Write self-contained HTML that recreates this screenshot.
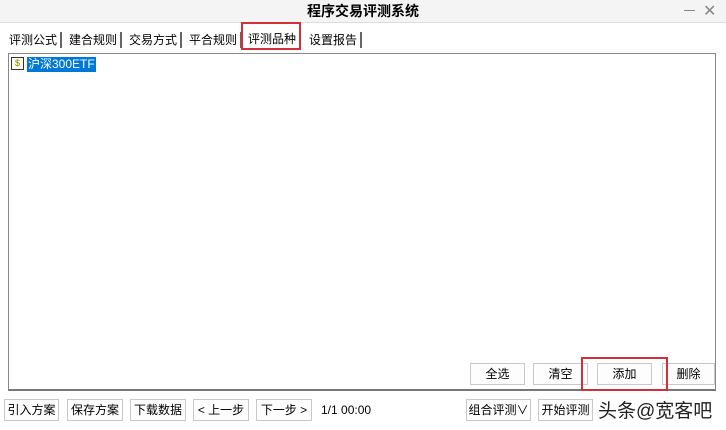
<!DOCTYPE html>
<html><head><meta charset="utf-8"><style>
*{margin:0;padding:0;box-sizing:border-box}
body{width:726px;height:430px;background:#fff;font-family:"Liberation Sans","Noto Sans CJK SC",sans-serif;font-size:12px;color:#000;position:relative;overflow:hidden}
.a{position:absolute}
.title{left:0;top:0;width:726px;height:23px;background:#f4f4f4;border-bottom:1px solid #ddd;text-align:center;font-weight:bold;font-size:14px;line-height:23px}
.tab{top:32px;height:16px;line-height:16px;border-right:2px solid #666;padding:0 3px;font-size:12px}
.btn{height:22px;border:1px solid #c8c8c8;background:#fdfdfd;text-align:center;line-height:20px;font-size:12px}
.red{border:2px solid #d0303a}
</style></head><body>
<div class="a title">程序交易评测系统</div>
<div class="a" style="left:684px;top:10px;width:11px;border-top:1px solid #888"></div>
<div class="a" style="left:703px;top:1px;font-size:16px;color:#888">✕</div>
<div class="a tab" style="left:6px">评测公式</div>
<div class="a tab" style="left:66px">建合规则</div>
<div class="a tab" style="left:126px">交易方式</div>
<div class="a tab" style="left:186px">平合规则</div>
<div class="a" style="left:248px;top:31px;line-height:16px">评测品种</div>
<div class="a tab" style="left:306px">设置报告</div>
<div class="a red" style="left:241px;top:22px;width:60px;height:28px"></div>
<div class="a" style="left:8px;top:53px;width:708px;height:305px;border:1px solid #888;border-bottom:none"></div>
<div class="a" style="left:11px;top:57px;width:13px;height:13px;border:1px solid #333;background:#ffe;font-size:9px;line-height:11px;text-align:center;color:#880">$</div>
<div class="a" style="left:27px;top:57px;height:15px;background:#0078d7;color:#fff;line-height:15px;padding:0 1px">沪深300ETF</div>
<div class="a" style="left:8px;top:358px;width:708px;height:33px;border-left:1px solid #888;border-right:1px solid #888;border-bottom:2px solid #777"></div>
<div class="a btn" style="left:470px;top:363px;width:55px">全选</div>
<div class="a btn" style="left:533px;top:363px;width:55px">清空</div>
<div class="a btn" style="left:597px;top:363px;width:55px">添加</div>
<div class="a btn" style="left:662px;top:363px;width:53px">删除</div>
<div class="a red" style="left:581px;top:357px;width:87px;height:34px"></div>
<div class="a btn" style="left:4px;top:399px;width:55px">引入方案</div>
<div class="a btn" style="left:67px;top:399px;width:56px">保存方案</div>
<div class="a btn" style="left:130px;top:399px;width:56px">下载数据</div>
<div class="a btn" style="left:193px;top:399px;width:56px">&lt; 上一步</div>
<div class="a btn" style="left:256px;top:399px;width:56px">下一步 &gt;</div>
<div class="a" style="left:321px;top:403px">1/1 00:00</div>
<div class="a btn" style="left:466px;top:399px;width:65px">组合评测∨</div>
<div class="a btn" style="left:538px;top:399px;width:55px">开始评测</div>
<div class="a" style="left:598px;top:396px;font-size:19px;color:#222">头条@宽客吧</div>
</body></html>
